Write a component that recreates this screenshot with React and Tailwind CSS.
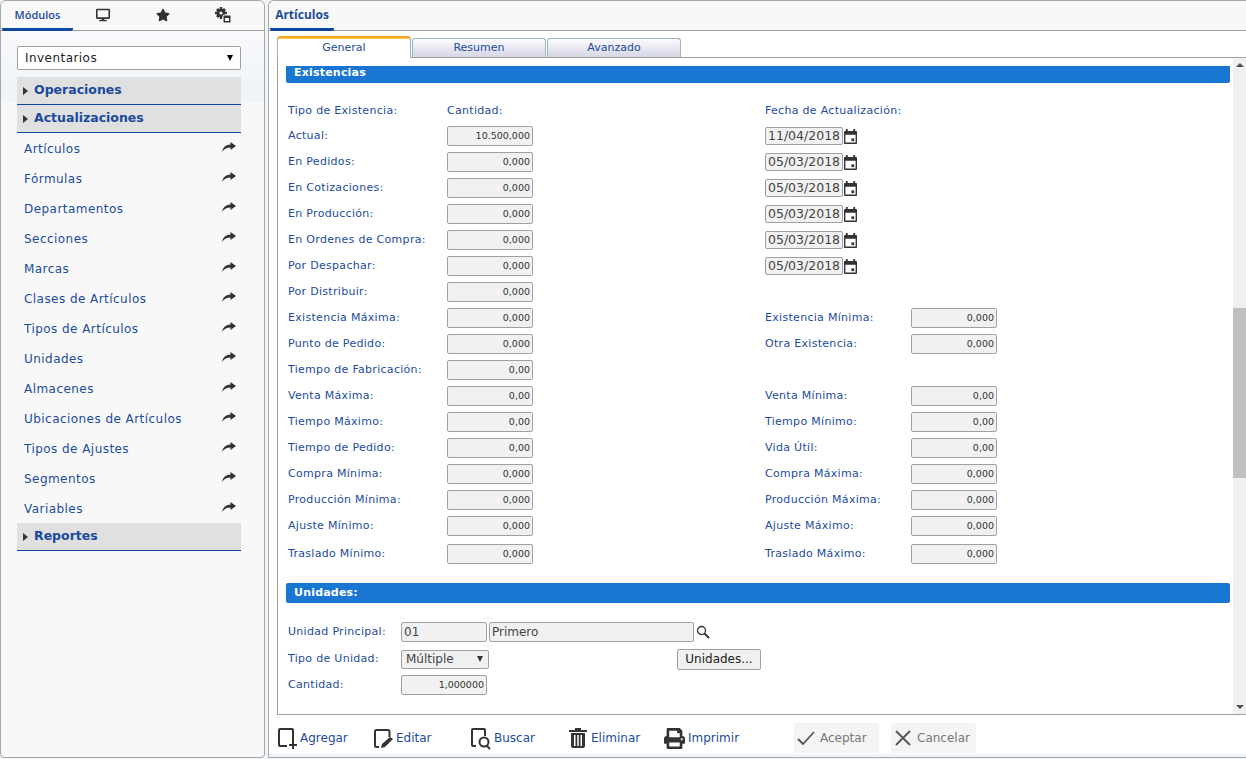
import React from "react";
import { FaDesktop, FaStar, FaPrint } from "react-icons/fa";

const labelC = "text-[#1c4b9c] text-[11px] leading-5 whitespace-nowrap tracking-[0.3px]";
const inp = "h-5 w-[86px] rounded-[2px] border border-[#a0a0a0] bg-[#f1f1f1] text-right pr-[2px] text-[9.5px] leading-[18px] text-[#333]";

const menu = ["Artículos","Fórmulas","Departamentos","Secciones","Marcas","Clases de Artículos","Tipos de Artículos","Unidades","Almacenes","Ubicaciones de Artículos","Tipos de Ajustes","Segmentos","Variables"];

function Head({ children }) {
  return (
    <div className="h-7 bg-[#e0e0e0] border-b border-[#0d47a1] flex items-center pl-[6px] gap-[6px] text-[12.5px] font-bold text-[#1a4a9c]">
      <span className="w-0 h-0 border-y-[4px] border-y-transparent border-l-[5px] border-l-[#333]" />
      <span className="-mt-[1px]">{children}</span>
    </div>
  );
}

function Num({ v }) { return <div className={inp}>{v}</div>; }

function DateF({ v }) {
  return (
    <div className="flex items-center h-5">
      <div className="h-[18px] w-[78px] rounded-[2px] border border-[#a0a0a0] bg-[#f1f1f1] text-[12.5px] leading-4 pl-[2px] text-[#444] whitespace-nowrap overflow-hidden">{v}</div>
      <svg width="13" height="15" viewBox="0 0 14 16" className="ml-[1px]">
        <path fill="#333" d="M2 0h2v2h6V0h2v2h1a1 1 0 0 1 1 1v12a1 1 0 0 1-1 1H1a1 1 0 0 1-1-1V3a1 1 0 0 1 1-1h1zM1.500 6v8.500h11V6z" />
        <rect x="8" y="10" width="3" height="3" fill="#333" />
      </svg>
    </div>
  );
}

const rows = [
  ["Actual:", "10.500,000", "d", "11/04/2018"],
  ["En Pedidos:", "0,000", "d", "05/03/2018"],
  ["En Cotizaciones:", "0,000", "d", "05/03/2018"],
  ["En Producción:", "0,000", "d", "05/03/2018"],
  ["En Ordenes de Compra:", "0,000", "d", "05/03/2018"],
  ["Por Despachar:", "0,000", "d", "05/03/2018"],
  ["Por Distribuir:", "0,000"],
  ["Existencia Máxima:", "0,000", "Existencia Mínima:", "0,000"],
  ["Punto de Pedido:", "0,000", "Otra Existencia:", "0,000"],
  ["Tiempo de Fabricación:", "0,00"],
  ["Venta Máxima:", "0,00", "Venta Mínima:", "0,00"],
  ["Tiempo Máximo:", "0,00", "Tiempo Mínimo:", "0,00"],
  ["Tiempo de Pedido:", "0,00", "Vida Útil:", "0,00"],
  ["Compra Mínima:", "0,000", "Compra Máxima:", "0,000"],
  ["Producción Mínima:", "0,000", "Producción Máxima:", "0,000"],
  ["Ajuste Mínimo:", "0,000", "Ajuste Máximo:", "0,000"],
  ["Traslado Mínimo:", "0,000", "Traslado Máximo:", "0,000"],
];

function Row({ r, i }) {
  return (
    <div className={`flex h-5 ${i === 16 ? "mt-2" : i === 0 ? "" : "mt-[6px]"}`}>
      <div className={`w-[159px] ${labelC}`}>{r[0]}</div>
      <div className="w-[318px]"><Num v={r[1]} /></div>
      {r[2] === "d" ? <DateF v={r[3]} /> : r[2] ? (
        <>
          <div className={`w-[146px] ${labelC}`}>{r[2]}</div>
          <Num v={r[3]} />
        </>
      ) : null}
    </div>
  );
}

function Tab({ children, active }) {
  return active ? (
    <div className="w-[134px] h-[22px] -mb-[1px] z-10 bg-white rounded-t-[3px] border border-[#a0b0b8] border-b-0 border-t-2 border-t-[#f5a623] shadow-[inset_0_1px_0_#ffc848] text-center text-[11px] leading-[19px] text-[#1c4b9c]">{children}</div>
  ) : (
    <div className="w-[134px] h-[19px] rounded-t-[3px] border border-[#9fb2bb] border-b-0 bg-[linear-gradient(#fbfbfe,#d6d6e6)] text-center text-[11px] leading-[17px] text-[#1c4b9c]">{children}</div>
  );
}

function Tool({ icon, label, w }) {
  return (
    <div className="flex items-center" style={{ width: w }}>
      {icon}
      <span className="text-[12px] text-[#1c4b9c]">{label}</span>
    </div>
  );
}

const IconAdd = (
  <svg width="22" height="24" viewBox="0 0 22 24" className="mr-px" fill="none" stroke="#333" strokeWidth="2">
    <path d="M10 20H3q-1 0-1-1V4q0-1 1-1h12q1 0 1 1v11" /><path d="M16 15v8M12 19h8" />
  </svg>
);
const IconEdit = (
  <svg width="24" height="24" viewBox="0 0 24 24" className="-mr-[1px]" fill="none" stroke="#333" strokeWidth="2">
    <path d="M6 21H3.500q-1.500 0-1.500-1.500V5.500Q2 4 3.500 4H15q1.500 0 1.500 1.500V11" />
    <path d="M8 22l1-4 8-7 3 2-8 8z" fill="#333" stroke="none" />
  </svg>
);
const IconFind = (
  <svg width="24" height="24" viewBox="0 0 24 24" fill="none" stroke="#333" strokeWidth="2">
    <path d="M6 20H3q-1 0-1-1V4q0-1 1-1h11q1 0 1 1v6" />
    <circle cx="14" cy="16" r="4.500" /><path d="M17 20l3 3" />
  </svg>
);
const IconTrash = (
  <svg width="18" height="20" viewBox="0 0 18 20" className="mr-[4px]">
    <path fill="#333" d="M0 2h6V0h6v2h6v2H0zM2 5h14v13a2 2 0 0 1-2 2H4a2 2 0 0 1-2-2zm3 2v11h1.500V7zm3.250 0v11h1.500V7zm3.250 0v11H13V7z" />
  </svg>
);
const IconGear = (
  <svg width="16" height="16" viewBox="0 0 16 16">
    <g fill="#333">
      <circle cx="6" cy="6" r="4.300" />
      <path d="M4.800 0h2.400v3H4.800zM4.800 9h2.400v3H4.800zM0 4.800h3v2.400H0zM9 4.800h3v2.400H9zM1 3l2-2 2 2-2 2zM7 3l2-2 2 2-2 2zM1 9l2 2 2-2-2-2zM7 9l2 2 2-2-2-2z" />
      <rect x="8" y="8" width="8" height="8" rx="1" stroke="#f8f8f8" strokeWidth="1" />
    </g>
    <circle cx="6" cy="6" r="1.600" fill="#f8f8f8" />
    <rect x="10" y="11" width="4" height="3" fill="#f8f8f8" />
  </svg>
);
const IconShare = (
  <svg width="14" height="10" viewBox="0 0 14 10" className="-mt-[5px]">
    <path fill="#333" d="M8.500 0L14 4l-5.500 4V5.500C5 5.500 2.500 6.800 0 9.800 1 5.300 4 2.600 8.500 2.500z" />
  </svg>
);

export default function App() {
  return (
    <div className="h-[759px] w-[1246px] flex overflow-hidden bg-[#eff4f8] font-['DejaVu_Sans','Verdana',sans-serif]">
      <aside className="w-[265px] h-[758px] border border-[#a8a8a8] rounded-t-[6px] rounded-b-[4px] bg-[linear-gradient(#f8f9fb_30px,#eef3f8_100px,#f8f8f8_100px)] flex flex-col shrink-0">
        <div className="h-[30px] flex border-b border-[#a0a0a0] bg-[#f8f8f8] rounded-t-[6px] shrink-0">
          <div className="w-[71px] h-[30px] ml-px border-b-[3px] border-[#0d47a1] rounded-b-[2px] text-center text-[#1c4b9c] text-[11px] font-semibold leading-[28px] font-['Open_Sans',sans-serif]">Módulos</div>
          <div className="w-[60px] flex justify-center items-center pb-px"><FaDesktop className="text-[#333] text-[14px]" /></div>
          <div className="w-[60px] flex justify-center items-center pb-px"><FaStar className="text-[#333] text-[14px]" /></div>
          <div className="w-[60px] flex justify-center items-center pb-px">{IconGear}</div>
        </div>
        <div className="px-4 pt-[15px] flex-1">
          <div className="h-6 w-[224px] bg-white border border-[#a0a0a0] rounded-[2px] flex items-center justify-between pl-[7px] pr-[7px] text-[12px] tracking-[0.45px] text-[#222]">
            <span>Inventarios</span>
            <span className="w-0 h-0 border-x-[3px] border-x-transparent border-t-[6px] border-t-black" />
          </div>
          <div className="w-[224px] mt-[7px]">
            <Head>Operaciones</Head>
            <Head>Actualizaciones</Head>
            <div>
              {menu.map((m) => (
                <div key={m} className="h-[30px] flex items-center justify-between pl-[7px] pr-[5px] pt-[2px] text-[12px] tracking-[0.45px] text-[#1c4b9c]">
                  <span>{m}</span>
                  {IconShare}
                </div>
              ))}
            </div>
            <Head>Reportes</Head>
          </div>
        </div>
      </aside>

      <main className="w-[978px] ml-[3px] shrink-0 flex flex-col border border-r-0 border-[#a8a8a8] rounded-tl-[6px] bg-white h-[758px]">
        <div className="h-[30px] bg-[#f8f8f8] border-b border-[#a0a0a0] rounded-tl-[6px] shrink-0">
          <div className="w-[64px] h-[30px] ml-px border-b-[3px] border-[#0d47a1] rounded-b-[2px] text-center text-[#1c4b9c] text-[12px] font-bold leading-[28px] font-['Open_Sans',sans-serif]">Artículos</div>
        </div>
        <div className="flex-1 min-h-0 flex flex-col">
          <div className="h-[26px] pl-2 flex items-end gap-[1px] shrink-0 relative">
            <Tab active>General</Tab>
            <Tab>Resumen</Tab>
            <Tab>Avanzado</Tab>
          </div>
          <div className="h-[658px] ml-2 border border-r-0 border-[#a0a0a0] flex shrink-0">
            <div className="flex-1 min-w-0 overflow-hidden pt-2 pl-2 pr-[3px]">
              <div className="h-[17px] bg-[#1976d2] rounded-b-[2px] text-white text-[11px] font-bold pl-2 leading-[14px] tracking-[0.2px]">Existencias</div>
              <div className="pl-[2px] mt-[18px]">
                <div className="flex h-5 mb-[5px]">
                  <div className={`w-[159px] ${labelC}`}>Tipo de Existencia:</div>
                  <div className={`w-[318px] ${labelC}`}>Cantidad:</div>
                  <div className={labelC}>Fecha de Actualización:</div>
                </div>
                {rows.map((r, i) => <Row key={r[0]} r={r} i={i} />)}
              </div>
              <div className="h-5 mt-[19px] bg-[#1976d2] rounded-[2px] text-white text-[11px] font-bold pl-2 leading-[19px] tracking-[0.2px]">Unidades:</div>
              <div className="pl-[2px] mt-[19px]">
                <div className="flex items-center h-5">
                  <div className={`w-[113px] ${labelC}`}>Unidad Principal:</div>
                  <div className="h-5 w-[86px] rounded-[2px] border border-[#a0a0a0] bg-[#f1f1f1] text-[12px] leading-[18px] pl-[2px] text-[#444]">01</div>
                  <div className="h-5 w-[205px] ml-[2px] rounded-[2px] border border-[#a0a0a0] bg-[#f1f1f1] text-[12px] leading-[18px] pl-[2px] text-[#444]">Primero</div>
                  <svg width="14" height="14" viewBox="0 0 14 14" className="ml-[2px]" fill="none" stroke="#333"><circle cx="5.500" cy="5.500" r="4" strokeWidth="1.300" /><path d="M8.500 8.500l4.500 4.500" strokeWidth="2" /></svg>
                </div>
                <div className="flex items-center h-5 mt-[7px] relative">
                  <div className={`w-[113px] ${labelC}`}>Tipo de Unidad:</div>
                  <div className="h-[19px] w-[88px] rounded-[2px] border border-[#a0a0a0] bg-[#f1f1f1] flex items-center justify-between pl-[4px] pr-[3px] text-[12px] text-[#444]">
                    <span>Múltiple</span>
                    <span className="w-0 h-0 mr-[2px] border-x-[3px] border-x-transparent border-t-[6px] border-t-[#333]" />
                  </div>
                  <div className="ml-[188px] h-[21px] w-[84px] rounded-[2px] border border-[#a0a0a0] bg-[#f0f0f0] text-center text-[12px] leading-[19px] text-[#222]">Unidades...</div>
                </div>
                <div className="flex items-center h-5 mt-[6px]">
                  <div className={`w-[113px] ${labelC}`}>Cantidad:</div>
                  <Num v="1,000000" />
                </div>
              </div>
            </div>
            <div className="w-[13px] bg-[#f0f0f0] flex flex-col items-center shrink-0 relative">
              <span className="mt-[5px] w-0 h-0 border-x-[4px] border-x-transparent border-b-[4px] border-b-[#505050]" />
              <div className="w-[13px] h-[170px] bg-[#c0c0c0] mt-[241px]" />
              <span className="absolute bottom-[5px] w-0 h-0 border-x-[4px] border-x-transparent border-t-[4px] border-t-[#505050]" />
            </div>
          </div>
          <div className="flex-1 flex items-center pl-2 pt-[8px] pb-[1px] bg-white">
            <Tool icon={IconAdd} label="Agregar" w={96} />
            <Tool icon={IconEdit} label="Editar" w={97} />
            <Tool icon={IconFind} label="Buscar" w={99} />
            <Tool icon={IconTrash} label="Eliminar" w={95} />
            <Tool icon={<FaPrint className="text-[#333] text-[21px] mr-[3px]" />} label="Imprimir" w={130} />
            <div className="w-[85px] h-[30px] bg-[#f4f4f4] rounded-[2px] flex items-center pl-[3px] text-[12px] text-[#777]">
              <svg width="18" height="14" viewBox="0 0 18 14" className="mr-[5px]" fill="none" stroke="#555" strokeWidth="1.800"><path d="M1 8l5 5L17 1" /></svg>
              Aceptar
            </div>
            <div className="w-[85px] h-[30px] ml-[12px] bg-[#f4f4f4] rounded-[2px] flex items-center pl-[4px] text-[12px] text-[#777]">
              <svg width="16" height="16" viewBox="0 0 16 16" className="mr-[6px]" fill="none" stroke="#555" strokeWidth="1.800"><path d="M1 1l14 14M15 1L1 15" /></svg>
              Cancelar
            </div>
          </div>
          <div className="h-[3px] bg-[#eff4f8] shrink-0" />
        </div>
      </main>
    </div>
  );
}
